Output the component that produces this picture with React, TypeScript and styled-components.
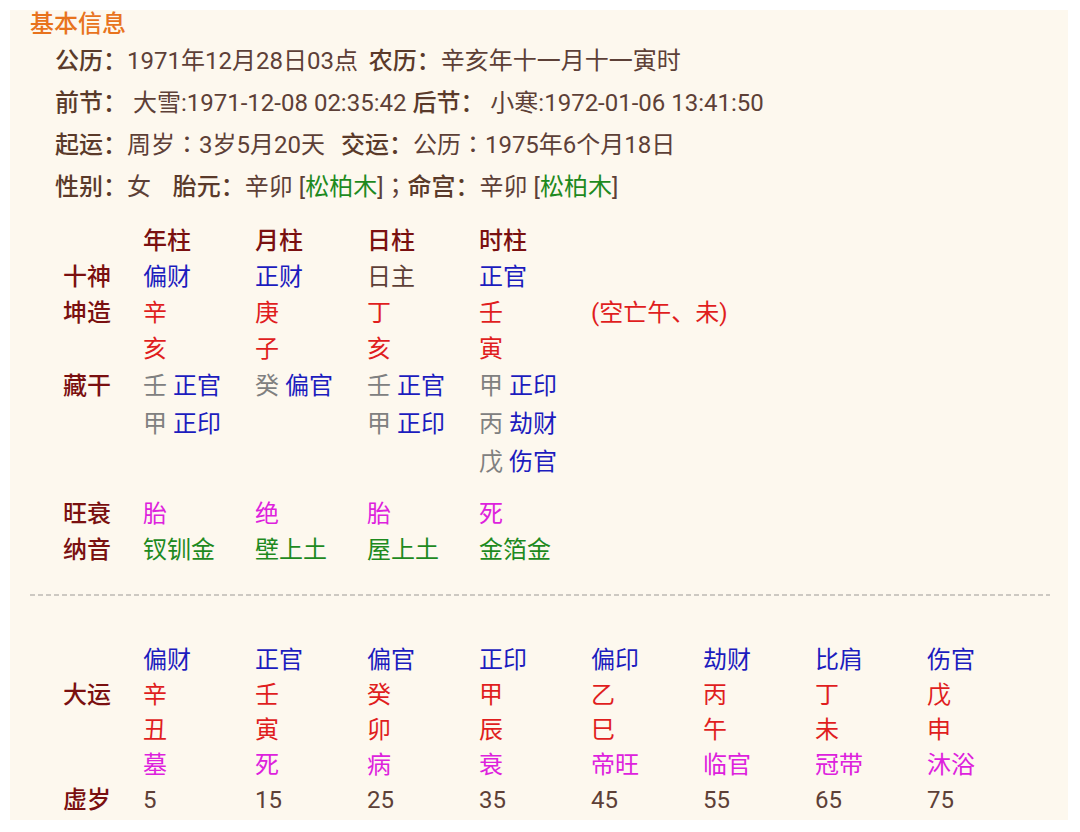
import React from "react";
import styled, { createGlobalStyle } from "styled-components";

const GlobalStyle = createGlobalStyle`
  html, body { margin: 0; padding: 0; background: #ffffff; }
  body { font-family: Roboto, "Noto Sans CJK SC", sans-serif; }
`;

const C = {
  brown: "#5d4037",
  orange: "#e8731d",
  label: "#7a1010",
  blue: "#1c1cbe",
  red: "#e01e1e",
  grey: "#808080",
  magenta: "#dd22dd",
  green: "#1e8a1e",
};

const Card = styled.div`
  margin: 10px 12px 0 10px;
  padding: 0 0 2px 0;
  background: #fdf8ee;
  font-size: 24px;
  color: ${C.brown};
`;

const Title = styled.div`
  padding-left: 20px;
  height: 28px;
  line-height: 28px;
  color: ${C.orange};
  font-weight: 500;
`;

const InfoBlock = styled.div`
  margin-top: 2px;
  padding-left: 45px;
`;

const InfoLine = styled.div`
  height: 42px;
  line-height: 42px;
  white-space: pre;
`;

const Key = styled.span<{ $ml?: number }>`
  font-weight: 500;
  color: #5a3a2a;
  margin-left: ${(p) => p.$ml || 0}px;
`;

const Punct = styled.span`
  font-family: Roboto, "Noto Sans CJK TC", sans-serif;
`;

const Green = styled.span`
  color: ${C.green};
`;

const Table = styled.div<{ $top: number; $cols: number }>`
  margin-top: ${(p) => p.$top}px;
  padding-left: 53px;
  display: grid;
  grid-template-columns: 80px repeat(${(p) => p.$cols}, 112px);
`;

const Cell = styled.div<{ $h: number; $color?: string; $strong?: boolean }>`
  height: ${(p) => p.$h}px;
  line-height: ${(p) => p.$h}px;
  color: ${(p) => p.$color || C.brown};
  font-weight: ${(p) => (p.$strong ? 500 : 400)};
  white-space: nowrap;
`;

const Stem = styled.span`
  color: ${C.grey};
  margin-right: 6px;
`;

const Shen = styled.span`
  color: ${C.blue};
`;

const Spacer = styled.div<{ $h: number }>`
  grid-column: 1 / -1;
  height: ${(p) => p.$h}px;
`;

const Dashed = styled.div`
  margin: 26px 18px 0 20px;
  height: 2px;
  background: repeating-linear-gradient(
    to right,
    #cdc9c2 0,
    #cdc9c2 5px,
    transparent 5px,
    transparent 8px
  );
`;

type Row = { label?: string; cells: (React.ReactNode | string)[]; color?: string; h: number; strongCells?: boolean };

const hidden = (s: string, g: string) => (
  <>
    <Stem>{s}</Stem>
    <Shen>{g}</Shen>
  </>
);

const pillarRows: Row[] = [
  { label: "", cells: ["年柱", "月柱", "日柱", "时柱", ""], color: C.label, h: 36, strongCells: true },
  { label: "十神", cells: ["偏财", "正财", "日主", "正官", ""], color: C.blue, h: 36 },
  { label: "坤造", cells: ["辛", "庚", "丁", "壬", "(空亡午、未)"], color: C.red, h: 36 },
  { label: "", cells: ["亥", "子", "亥", "寅", ""], color: C.red, h: 36 },
  { label: "藏干", cells: [hidden("壬", "正官"), hidden("癸", "偏官"), hidden("壬", "正官"), hidden("甲", "正印"), ""], h: 38 },
  { label: "", cells: [hidden("甲", "正印"), "", hidden("甲", "正印"), hidden("丙", "劫财"), ""], h: 38 },
  { label: "", cells: ["", "", "", hidden("戊", "伤官"), ""], h: 38 },
];

const pillarRows2: Row[] = [
  { label: "旺衰", cells: ["胎", "绝", "胎", "死", ""], color: C.magenta, h: 36 },
  { label: "纳音", cells: ["钗钏金", "壁上土", "屋上土", "金箔金", ""], color: C.green, h: 36 },
];

const dayunRows: Row[] = [
  { label: "", cells: ["偏财", "正官", "偏官", "正印", "偏印", "劫财", "比肩", "伤官"], color: C.blue, h: 36 },
  { label: "大运", cells: ["辛", "壬", "癸", "甲", "乙", "丙", "丁", "戊"], color: C.red, h: 35 },
  { label: "", cells: ["丑", "寅", "卯", "辰", "巳", "午", "未", "申"], color: C.red, h: 35 },
  { label: "", cells: ["墓", "死", "病", "衰", "帝旺", "临官", "冠带", "沐浴"], color: C.magenta, h: 35 },
  { label: "虚岁", cells: ["5", "15", "25", "35", "45", "55", "65", "75"], color: C.brown, h: 35 },
];

const renderRows = (rows: Row[], prefix: string) =>
  rows.map((r, i) => (
    <React.Fragment key={prefix + i}>
      <Cell $h={r.h} $color={C.label} $strong>
        {r.label}
      </Cell>
      {r.cells.map((c, j) => {
        const isDayMaster = prefix === "p" && i === 1 && j === 2;
        return (
          <Cell key={j} $h={r.h} $color={isDayMaster ? C.brown : r.color} $strong={r.strongCells}>
            {c}
          </Cell>
        );
      })}
    </React.Fragment>
  ));

export default function App() {
  return (
    <>
      <GlobalStyle />
      <Card>
        <Title>基本信息</Title>
        <InfoBlock>
          <InfoLine>
            <Key>公历：</Key>1971年12月28日03点 <Key $ml={5}>农历：</Key>辛亥年十一月十一寅时
          </InfoLine>
          <InfoLine>
            <Key>前节：</Key> 大雪:1971-12-08 02:35:42 <Key>后节：</Key> 小寒:1972-01-06 13:41:50
          </InfoLine>
          <InfoLine>
            <Key>起运：</Key>周岁<Punct>：</Punct>3岁5月20天 <Key $ml={10}>交运：</Key>公历<Punct>：</Punct>1975年6个月18日
          </InfoLine>
          <InfoLine>
            <Key>性别：</Key>女{"   "}<Key $ml={4}>胎元：</Key>辛卯 [<Green>松柏木</Green>]<Punct>；</Punct><Key>命宫：</Key>辛卯 [<Green>松柏木</Green>]
          </InfoLine>
        </InfoBlock>
        <Table $top={15} $cols={5}>
          {renderRows(pillarRows, "p")}
          <Spacer $h={15} />
          {renderRows(pillarRows2, "q")}
        </Table>
        <Dashed />
        <Table $top={46} $cols={8}>
          {renderRows(dayunRows, "d")}
        </Table>
      </Card>
    </>
  );
}
